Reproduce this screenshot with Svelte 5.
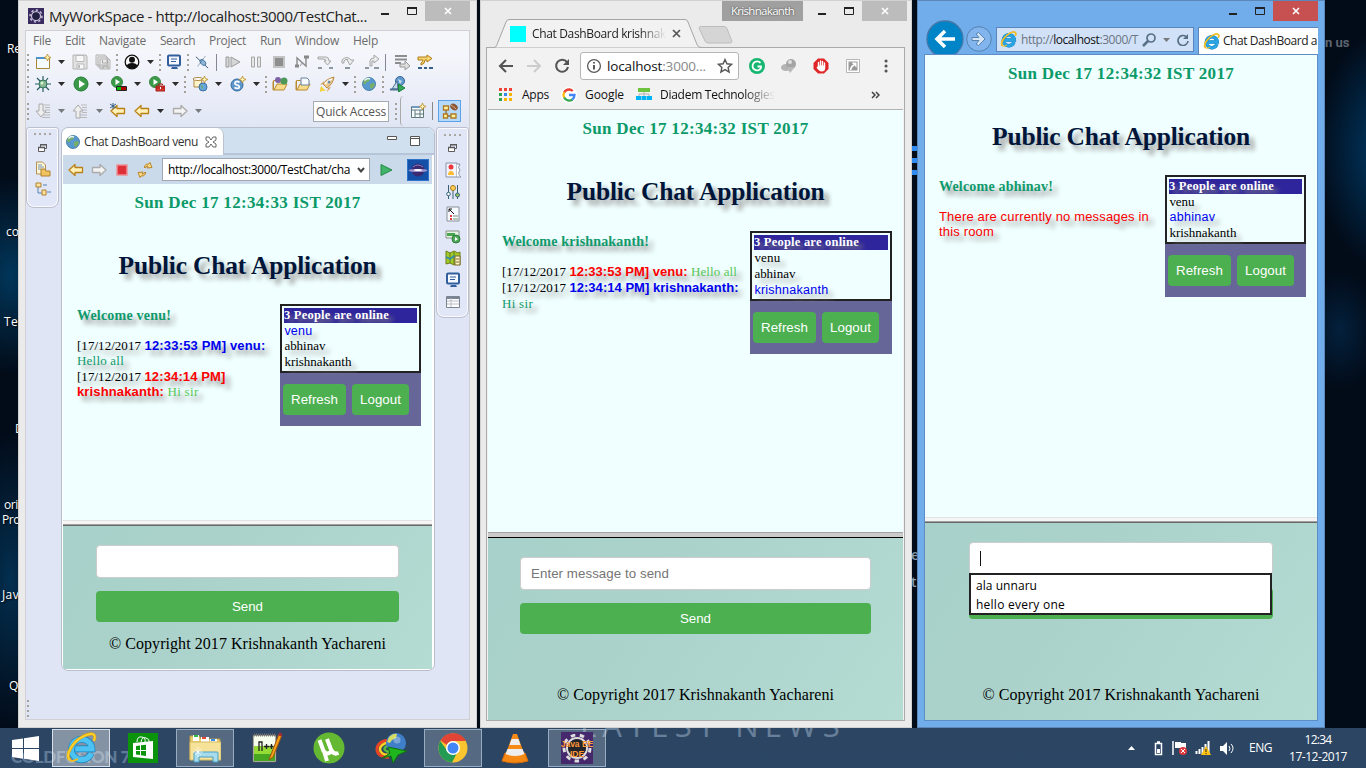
<script>
  // Spreads letters so that a label takes up exactly the given width.
  function fit(node, width) {
    const n = node.textContent.length;
    if (!n) return;
    const natural = node.getBoundingClientRect().width;
    node.style.letterSpacing = `${(width - natural) / n}px`;
  }

  const svg = (body, w = 16, h = w, vb = `0 0 ${w} ${h}`) =>
    `<svg width="${w}" height="${h}" viewBox="${vb}" fill="none">${body}</svg>`;

  const folder = '<path d="M1 5.5V14h11l3-6H5l-3 6" fill="#f8dc8c" stroke="#b98a2e"/><path d="M1.500 13.500V4.500h4l1 1.500h6v2" stroke="#b98a2e"/>';
  const play = '<circle cx="8" cy="8" r="7" fill="#3b9a48" stroke="#1f7a35"/><path d="M6 4l6 4-6 4z" fill="#fff"/>';
  const smallPlay = '<circle cx="6" cy="6" r="5.500" fill="#3b9a48" stroke="#3a8a43"/><path d="M4.500 3l4.500 3-4.500 3z" fill="#fff"/>';
  const spark = '<path d="M12.500 0l1 2.500L16 3.500l-2.500 1-1 2.500-1-2.500L9 3.500l2.500-1z" fill="#fff3b0" stroke="#b98a2e" stroke-width=".8"/>';
  const globe = '<circle cx="8" cy="8" r="6.500" fill="#5799cf" stroke="#336e9b" stroke-width=".8"/><path d="M3 3.500c2-2 5-2 6-1l-1 3-3 1-1 2-2-1zM9 8l4-1 1 2-3 4-2-1z" fill="#78ae65"/><path d="M3.500 4.500Q6 1.500 9 3" stroke="#e4f5ff" stroke-width="1.500"/>';
  const arrowL = (f, s) => `<path d="M1 8l6-5.500v3h7.500v5H7v3z" fill="${f}" stroke="${s}" stroke-width="1.300" stroke-linejoin="round"/>`;
  const arrowR = (f, s) => `<path d="M15 8L9 2.500v3H1.500v5H9v3z" fill="${f}" stroke="${s}" stroke-width="1.300" stroke-linejoin="round"/>`;
  // Blue "e" with a golden ring: an open ring, a crossbar and the orbit over it.
  const ie = (s, fill = '#2aa5e4') => svg(`<path d="M20.500 16.500A8 8 0 1 1 21 13.200H8" stroke="#1580bd" stroke-width="5.200"/><path d="M20.500 16.500A8 8 0 1 1 21 13.200H8" stroke="${fill}" stroke-width="4.200"/><path d="M4 22C-1 18 7 7 14 3.500S25 1 22.500 7" stroke="#e2a20f" stroke-width="2.400"/><path d="M4 22C-1 18 7 7 14 3.500S25 1 22.500 7" stroke="#fbd32f" stroke-width="1.400"/><path d="M4 22q2 1.500 6-1" stroke="#f3bd1f" stroke-width="1.500"/>`, s, s, '0 0 25 25');
  const googleG = '<path d="M8 2.500a5.500 5.500 0 0 1 3.800 1.500" stroke="#ea4335" stroke-width="2.300"/><path d="M3.200 5.500A5.500 5.500 0 0 1 8.500 2.500" stroke="#ea4335" stroke-width="2.300"/><path d="M3.200 5.300a5.500 5.500 0 0 0 0 5.400" stroke="#fbbc05" stroke-width="2.300"/><path d="M3.200 10.500a5.500 5.500 0 0 0 8.300 2" stroke="#34a853" stroke-width="2.300"/><path d="M8 8h5.500q0 3-2.200 4.700" stroke="#4285f4" stroke-width="2.300"/>';
  const gear = (c, r, w) => `<circle cx="16" cy="16" r="${r}" stroke="${c}" stroke-width="${w}"/><circle cx="16" cy="16" r="${r + 3}" stroke="${c}" stroke-width="3" stroke-dasharray="4.500 4.600"/>`;
  const linesR = '<path d="M9 2h6M10 4.500h5M10 7h5M10 9.500h5M8 12h7M7 14.500h8" stroke="#b9b9b9"/>';

  const icons = {
    grip: svg('<path d="M1 0v17" stroke="#a5a199" stroke-width="2" stroke-dasharray="2 3"/>', 2, 17),
    sep: svg('<path d="M.5 0v17" stroke="#848892"/>', 1, 17),
    drop: svg('<path d="M0 0h7L3.500 4z" fill="#2c2c2c"/>', 7, 4),
    dropG: svg('<path d="M0 0h7L3.500 4z" fill="#77797d"/>', 7, 4),
    newFile: svg('<path d="M1.500 3.500h13v11h-13z" fill="#f3fbff" stroke="#a98637"/><path d="M1 4h10" stroke="#4a93cc" stroke-width="2"/>' + spark),
    save: svg('<path d="M1 1h13l1 1v13H1z" fill="#e3e3e3" stroke="#b5b5b5"/><path d="M4 1.500h8v6H4zM5 10h7v5H5z" fill="#f8f8f8" stroke="#b9b9b9"/><path d="M7 11v3" stroke="#aaa" stroke-width="1.500"/>'),
    saveAll: svg('<path d="M1 1h9l2 2v8H1zM3 3h9l1 1v9H3zM5 5h9l1 1v9H5z" fill="#e9e9e9" stroke="#b3b3b3"/><path d="M7.500 6v3h5V6M8 15v-3h5v3" stroke="#aaa"/>'),
    person: svg('<circle cx="8" cy="8" r="6.800" fill="#fff" stroke="#111" stroke-width="1.300"/><circle cx="8" cy="5.800" r="3" fill="#111"/><path d="M2.500 12q1-3 5.500-3t5.500 3Q8 17 2.500 12z" fill="#111"/>'),
    monitor: svg('<rect x="2" y="1.500" width="12" height="10" rx="1" fill="#f5f9ff" stroke="#315f9d" stroke-width="2"/><path d="M5 5h6M5 7.500h5" stroke="#315f9d"/><path d="M5 15h7l-1-2H6z" fill="#315f9d"/>'),
    skip: svg('<path d="M1 2l14 13" stroke="#23476f"/><ellipse cx="9" cy="8.500" rx="4" ry="2.500" transform="rotate(45 9 8.500)" fill="#91b7d9" stroke="#38709f"/><path d="M12 1L3 13" stroke="#23476f" stroke-width=".5"/>', 14, 14, '0 0 16 16'),
    resume: svg('<path d="M1 3h3v10H1zM6 3l9 5-9 5z" fill="#d6d6d6" stroke="#9c9c9c"/>'),
    pause: svg('<path d="M3.500 3h3v10h-3zM9.500 3h3v10h-3z" fill="#e6e6e6" stroke="#a6a6a6"/>'),
    stopG: svg('<path d="M3 3h10v10H3z" fill="#8e8e8e" stroke="#c3c3c3" stroke-width="2"/>'),
    disc: svg('<path d="M3 13V4l9 8V3" stroke="#909090" stroke-width="1.500"/><path d="M1 12h4M10 3h5" stroke="#888" stroke-width="3"/><path d="M6 12l3-4" stroke="#999"/>'),
    into: svg('<path d="M1 3h8q3 0 3 4h2l-3.500 4L7 7h2q0-2-3-2H1z" fill="#ececec" stroke="#a5a5a5"/><path d="M1 14h4M12 14h4" stroke="#8e969f" stroke-width="2"/>'),
    over: svg('<path d="M2 9V6q5-5 9 0h3l-4 5-3-5h1Q6 4 4 7v2z" fill="#ececec" stroke="#a5a5a5"/><path d="M5 14h5" stroke="#8e969f" stroke-width="2"/>'),
    ret: svg('<path d="M6 12V7q0-3 4-3V1l5 4-5 4V7H8v5z" fill="#ececec" stroke="#a5a5a5"/><path d="M1 14h4M10 14h5" stroke="#8e969f" stroke-width="2"/>'),
    dropFrame: svg('<path d="M1 2h12M1 5.500h12M1 9h6" stroke="#8d8d8d" stroke-width="2"/><path d="M6 10h5V7l5 5-5 4v-3H6z" fill="#ddd" stroke="#999"/>'),
    filters: svg('<path d="M1 3h9V1l5 3.500L10 8V6H8q0 4-4 5V9q2-1 2-3H1z" fill="#f6d66c" stroke="#b17b19"/><path d="M1 14h4M7 14h3M12 14h4" stroke="#385f89" stroke-width="2"/>'),
    bug: svg('<path d="M2 2l4 4M8 0v5M13 2l-3 4M0 8h5M11 8h5M2 14l4-4M8 11v5M14 14l-4-4" stroke="#275e65" stroke-width="1.200"/><circle cx="8" cy="8" r="4" fill="#87b793" stroke="#34725b"/><circle cx="7" cy="7" r="1.500" fill="#d2f5ca"/>'),
    run: svg(play),
    cover: svg(smallPlay + '<path d="M6 10h4v4H6z" fill="#00c000"/><path d="M10 10h5v4h-5z" fill="#b00000"/><path d="M5.500 10.500h10v4h-10z" stroke="#222"/>'),
    ext: svg(smallPlay + '<path d="M7 10h9v5H7z" fill="#d93a32" stroke="#a41b19"/><path d="M9.500 9V8h4v1M7 12h9" stroke="#a41b19"/><path d="M11 12h1" stroke="#fff" stroke-width="2"/>'),
    server: svg('<path d="M2 3h8l-1 8H2z" fill="#fff4ca" stroke="#ad8740"/><ellipse cx="6" cy="3" rx="5" ry="1.500" fill="#fff" stroke="#ad8740"/><circle cx="11" cy="11" r="4" fill="#67a7de" stroke="#386fa2"/><path d="M9 9l2 1-1 4" fill="#71ac5a"/>' + spark),
    ess: svg('<circle cx="7" cy="9" r="6" fill="#5f97cd" stroke="#326a9c"/><path d="M9.500 6.500Q7 4.500 5.200 6.300 4 8.500 7 9t2 3Q7 13 4.500 11.500" stroke="#fff" stroke-width="1.700"/>' + spark),
    balls: svg(folder + '<circle cx="6" cy="4" r="3" fill="#7d62a7"/><circle cx="12" cy="5" r="3.500" fill="#4b9859"/>'),
    folder2: svg(folder + '<path d="M6 2h6l2 2v5H6z" fill="#f7fbff" stroke="#68819a"/>'),
    rocket: svg('<path d="M4 8q3-5 11-7-1 7-7 11z" fill="#ecc98d" stroke="#ba8d4a"/><path d="M6 8q3-4 7-5" stroke="#fff" stroke-width="1.500"/><path d="M2 10l5 5q-3-1-6 1 0-4 1-6z" fill="#f4d43c"/><path d="M4 8L1 9l4-4zM9 12l-1 4 4-5z" fill="#d39c55"/><circle cx="10" cy="6" r="1.500" fill="#738ca1"/>'),
    globe: svg(globe),
    globeRun: svg('<circle cx="10" cy="5" r="4.500" fill="#5f9bcf" stroke="#3a6696"/><path d="M8 3l4 2-2 3" fill="#c7dceb"/><path d="M2 13L7 5l1 8z" fill="#c7dceb" stroke="#4d6f94"/><path d="M0 13.500h9" stroke="#4d6f94" stroke-width="2"/><path d="M8.500 8l6.500 4-6.500 4z" fill="#35a85a" stroke="#19803b"/>'),
    nextAnn: svg(linesR + '<path d="M4 1h4v7h3l-5 6-5-6h3z" fill="#eee" stroke="#aaa"/>'),
    prevAnn: svg(linesR + '<path d="M4 15h4V8h3L6 2 1 8h3z" fill="#eee" stroke="#aaa"/>'),
    lastEdit: svg(arrowL('#fff1b7', '#b98015') + '<path d="M3 0v6M0 1l6 4M6 1L0 5" stroke="#385f86"/>'),
    back: svg(arrowL('#fff1b7', '#b98015')),
    fwd: svg(arrowR('#f3f3f3', '#aaa')),
    persp: svg('<path d="M1.500 3.500h12v11h-12zM1 7h13M5 7v8M10 7v8M5 11h9" fill="#f7fcff" stroke="#617b7c"/><path d="M2 4h8" stroke="#709ac1" stroke-width="2"/>' + spark),
    javaEE: svg('<path d="M4 7v6h5" stroke="#8b6a3a" stroke-width="1.300"/><path d="M1.500 3h5v4h-5zM9 11h5v4H9zM1.500 11h4v4h-4z" fill="#fff1a3" stroke="#b17a20" stroke-width="1.300"/><ellipse cx="12" cy="4" rx="4" ry="3" transform="rotate(35 12 4)" fill="#8b5635"/><path d="M9 2q3 2 5 4" stroke="#e0b28c"/>'),
    logo: svg('<rect width="32" height="32" fill="#392b60"/>' + gear('#c9c3d9', 9, 2.5) + '<circle cx="16" cy="16" r="7" fill="#222040"/>', 16, 16, '0 0 32 32'),
    dots: svg('<path d="M0 1h17" stroke="#aaa7a0" stroke-width="2" stroke-dasharray="2 3"/>', 17, 2),
    restore: svg('<path d="M2.500 3V.500h6v4H6" stroke="#5a5a5a"/><path d="M.5 3.500h6v4h-6z" fill="#fff" stroke="#5a5a5a"/><path d="M0 3.500h7M2 .8h7" stroke="#5a5a5a" stroke-width="1.500"/>', 9, 8),
    explorer: svg('<path d="M1.500 1h6l3 3v9h-9z" fill="#fff7d6" stroke="#b18f55"/><path d="M3 4h4M3 6h6M3 8h3" stroke="#7490ac"/><path d="M6 8h4l1 2h4v5H6z" fill="#f1c35c" stroke="#ad8032"/>'),
    outline: svg('<path d="M3 6v6h4" stroke="#5683b4"/><path d="M1 2h5v4H1zM7 9h4v5H7z" fill="#ffe29c" stroke="#ad8032"/><path d="M8 4h4M12 11h4" stroke="#5683b4"/>'),
    snippets: svg('<path d="M1 1h11v14H1z" fill="#f4f5ff" stroke="#8794aa"/><path d="M12 2h3q-3 4 0 6-3 4 1 7h-4" fill="#fff" stroke="#8794aa"/><circle cx="6" cy="5" r="2.500" fill="#ed373c"/><path d="M3 13q0-4 3-4t3 4z" fill="#ffbb31"/>'),
    sliders: svg('<path d="M3.500 1v14M8 1v14M12.500 1v14" stroke="#385e78"/><circle cx="3.500" cy="10" r="1.800" fill="#fff" stroke="#32677c"/><circle cx="8" cy="4" r="2.500" fill="#ffd153" stroke="#a77b20"/><circle cx="12.500" cy="11" r="2" fill="#9cbd5b" stroke="#32677c"/>'),
    pal: svg('<path d="M2 1h12v14H2z" fill="#f8fbff" stroke="#899199"/><path d="M4 3l5 5M4 6V3h3" stroke="#111"/><path d="M5 10h2M5 13h2" stroke="#e14341" stroke-width="2"/><path d="M8 10h5M8 13h5" stroke="#6c9271"/>'),
    servers: svg('<path d="M1 3h13v7H1z" fill="#e8f3e8" stroke="#849284"/><path d="M2 5h8v3H2z" fill="#48a54d"/><circle cx="11" cy="11" r="4" fill="#4ca75b" stroke="#307d3b"/><path d="M10 9l3 2-3 2z" fill="#fff"/>'),
    map: svg('<path d="M1 1l4 2 4-2 4 2 2-1v13l-3-1-3 1-4-2-4 1z" fill="#a5cb2a" stroke="#6d7c1b"/><path d="M5 3v10M9 2v12" stroke="#5c7a1b"/><path d="M1 7l4 2 4-3 3 2" stroke="#308fa6" stroke-width="1.800"/><path d="M10 6h5v9h-5z" fill="#fff6cc" stroke="#7c662d"/><path d="M11 9h3M11 12h3" stroke="#7c662d"/>'),
    props: svg('<path d="M1.500 2.500h13v11h-13z" fill="#fff" stroke="#7b8492"/><path d="M1 4h14" stroke="#7b8492" stroke-width="2"/><path d="M6 4v9M2 7h12M2 10h12" stroke="#b7bcc5"/>'),
    stop: svg('<path d="M3 3h10v10H3z" fill="#df3038" stroke="#ee9097" stroke-width="1.500"/>'),
    refresh: svg('<path d="M7 5q2-4 5-3l1-1.500 2 5-5 .5 1-2q-2-.5-3 2zM9 11q-2 4-5 3l-1 1.500-2-5 5-.5-1 2q2 .5 3-2z" fill="#fbdc88" stroke="#b98329" stroke-linejoin="round"/>'),
    go: svg('<path d="M3 2.500l11 5.500-11 5.500z" fill="#42b46a" stroke="#238a48"/>'),
    ecl: svg('<rect width="22" height="22" fill="#1450a8"/><path d="M.5.5h21v21H.5z" stroke="#2f74cc"/><circle cx="11" cy="11" r="6.500" fill="#3b2a70"/><path d="M6 8q5-4 10 0" stroke="#8f7fc0"/><ellipse cx="11" cy="11.500" rx="9.500" ry="1.600" fill="#9f93cf"/><ellipse cx="11" cy="11" rx="4" ry="1" fill="#fff"/>', 22),
    tabClose: svg('<path d="M1 1h3l2 3 2-3h3v3L8 6l3 2v3H8L6 8l-2 3H1V8l3-2-3-2z" fill="#fff" stroke="#555" stroke-width=".9"/>', 12),
    min: svg('<path d="M0 1h8" stroke="#222" stroke-width="2"/>', 8, 2),
    max: svg('<path d="M.5 1.500h9v6h-9z" stroke="#222"/><path d="M0 1h10" stroke="#222" stroke-width="2"/>', 10, 8),
    x: svg('<path d="M1 1l6 6M7 1L1 7" stroke="#fff" stroke-width="1.600"/>', 8),
    eMin: svg('<path d="M.5.5h9v3h-9z" fill="#fff" stroke="#555"/>', 10, 4),
    eMax: svg('<path d="M.5.5h9v9h-9zM0 2.500h10" fill="#fff" stroke="#555"/>', 10),
    cBack: svg('<path d="M15 8H2M8 2L2 8l6 6" stroke="#555" stroke-width="2.100"/>'),
    cFwd: svg('<path d="M1 8h13M8 2l6 6-6 6" stroke="#ccc" stroke-width="2"/>'),
    cLoad: svg('<path d="M13 4.200A6 6 0 1 0 14 9" stroke="#555" stroke-width="2.100"/><path d="M15 1v6H9z" fill="#555"/>'),
    info: svg('<circle cx="8" cy="8" r="6.400" stroke="#5a5a5a" stroke-width="1.300"/><path d="M8 7v4.500M8 4v1.600" stroke="#5a5a5a" stroke-width="2"/>'),
    star: svg('<path d="M8 1.500l1.900 4.300 4.700.5-3.500 3.100 1 4.600L8 11.600 3.900 14l1-4.600L1.400 6.300l4.700-.5z" stroke="#555" stroke-width="1.400"/>'),
    gram: svg('<circle cx="8" cy="8" r="8" fill="#15b66f"/><path d="M11.500 5A4.500 4.500 0 1 0 12 10V8.500H8.500" stroke="#fff" stroke-width="1.800"/>'),
    pin: svg('<ellipse cx="5" cy="9.500" rx="5" ry="3.500" fill="#b3b3b3"/><circle cx="10" cy="6" r="5" fill="#a5a5a5"/><path d="M6 9l3 6 5-6z" fill="#b8b8b8"/><circle cx="9" cy="4" r="2" fill="#dedede"/>'),
    block: svg('<path d="M5 .5h6L15.500 5v6L11 15.500H5L.5 11V5z" fill="#df2526"/><path d="M5.500 9V4.500M7.500 8V3M9.500 8V3.500M11.500 9V5" stroke="#fff" stroke-width="1.400" stroke-linecap="round"/><path d="M5 7.500h7.200V10q0 3.500-3.500 3.500Q6 13.500 3.500 9.500l1-.7z" fill="#fff"/>'),
    share: svg('<path d="M1.500 1.500h13v13h-13z" fill="#fff" stroke="#b6b6b6"/><path d="M3.500 3.500h9v9h-9z" fill="#999"/><path d="M5.500 12Q6 8.500 9 7" stroke="#fff" stroke-width="1.500"/><path d="M6.500 4.500h5v5z" fill="#fff"/>'),
    menu: svg('<path d="M2 2h.1M2 7h.1M2 12h.1" stroke="#555" stroke-width="3" stroke-linecap="round"/>', 4, 14),
    apps: svg('<path d="M0 1.500h13" stroke="#ef4338" stroke-width="3" stroke-dasharray="3 2"/><path d="M0 6.500h3" stroke="#31a350" stroke-width="3"/><path d="M5 6.500h3" stroke="#3387ed" stroke-width="3"/><path d="M10 6.500h3M5 11.500h3M10 11.500h3" stroke="#f7b400" stroke-width="3"/><path d="M0 11.500h3" stroke="#31a350" stroke-width="3"/>', 13),
    google: svg('<circle cx="8" cy="8" r="8" fill="#fff"/>' + googleG),
    diadem: svg('<path d="M2 1h12v4H2z" fill="#6dc23e"/><path d="M8 5v5M3 9V7h10v2" stroke="#b3b3b3"/><path d="M0 9h5v4H0zM5.500 9h5v4h-5zM11 9h5v4h-5z" fill="#00b3f4"/>'),
    more: svg('<path d="M1 1l3 3-3 3M5 1l3 3-3 3" stroke="#444" stroke-width="1.500"/>', 9, 8),
    tabX: svg('<path d="M1 1l7 7M8 1L1 8" stroke="#555" stroke-width="1.700"/>', 9),
    ieBack: svg('<circle cx="19" cy="19" r="18" fill="#0084c8" stroke="#4377a7" stroke-width="1.300"/><path d="M29 19H12M19 11l-8 8 8 8" stroke="#fff" stroke-width="3.500"/>', 38),
    ieFwd: svg('<circle cx="13" cy="13" r="12.300" fill="#82b5ee" stroke="#5581ae"/><path d="M6 11.500h7L10 8l2.500-1.500L19 13l-6.500 6.500L10 18l3-3.500H6z" fill="#d4e5f8" stroke="#5884ae"/>', 26),
    ie16: ie(17),
    search: svg('<circle cx="9" cy="5" r="4" stroke="#587087" stroke-width="1.700"/><path d="M6 8l-5 5" stroke="#587087" stroke-width="2.500"/>', 14),
    ieLoad: svg('<path d="M10 3.500A5 5 0 1 0 12 8" stroke="#587087" stroke-width="1.700"/><path d="M12 1v5H7z" fill="#587087"/>', 13),
    start: svg('<path d="M0 4l11-1.600V12H0zM12 2.200L27 0v12H12zM0 13h11v9.700L0 21zM12 13h15v12l-15-2.200z" fill="#fff"/>', 27, 25),
    ie32: ie(32, '#4cc3f2'),
    store: svg('<path d="M0 0h30v30H0z" fill="#0a930b"/><path d="M5 10l20-2v18L5 24z" fill="#fff"/><path d="M9 9q0-6 5-5 4 1 3 5M13 9q1-6 5-4 4 1 3 4" stroke="#fff"/><path d="M8 13l4-.5v4.500H8zM13 12.300l5-.5V17h-5zM8 18h4v4l-4-.5zM13 18h5v5l-5-.7z" fill="#0a930b"/>', 30),
    files: svg('<path d="M1 3h9l2 3h19v20H1z" fill="#e9cf6d" stroke="#b89b45"/><path d="M4 2h6v6H4zM12 4h8v6h-8zM21 6h7v6h-7z" fill="#fff"/><path d="M5 3h4" stroke="#30b84b" stroke-width="2"/><path d="M13 5h4" stroke="#e8462d" stroke-width="2"/><path d="M22 7h4" stroke="#378ee2" stroke-width="2"/><path d="M1 9h31v18H1z" fill="#f6e299" stroke="#d3bb65"/><path d="M5 20q0-1 1-1h22q1 0 1 1v9h-5v-5H10v5H5z" fill="#a6dcec" stroke="#4ba0c5"/><path d="M9 14v10M4 19h10M6 16l6 6M12 16l-6 6" stroke="#fff" stroke-width=".7"/>', 32, 30),
    npp: svg('<path d="M1 3h23v27H1z" fill="#f7ffed" stroke="#555"/><path d="M2 14h21v15H2z" fill="#95dc35"/><path d="M2 22h21v7H2z" fill="#279019" opacity=".7"/><path d="M2 3h21" stroke="#777" stroke-width="3" stroke-dasharray="1 1"/><path d="M7 19V10h3v9M12 14.500h5M14.500 12v5M17.500 14.500h4M19.500 12v5" stroke="#222" stroke-width="1.300"/><path d="M27 2L18 25l-1 3 4-3L30 3z" fill="#f5a313" stroke="#9e5315"/><path d="M27 2l3 1" stroke="#a72b32" stroke-width="3"/>', 30, 32),
    ut: svg('<circle cx="16" cy="16" r="15.500" fill="#65b832"/><path d="M6.500 8l4 11q4 5 8 0L14 7M18.500 18q2 5 7 3M11 19l3 10" stroke="#fff" stroke-width="4"/>', 32),
    idm: svg('<path d="M14 8C-3 9-1 27 14 25" stroke="#e84424" stroke-width="3"/><path d="M14 10.500C1 12 3 24 14 22.500" stroke="#fad322" stroke-width="2.500"/><path d="M14 13Q5 17 14 20" stroke="#54be3a" stroke-width="2.500"/><circle cx="21" cy="11" r="10" fill="#3f7fc9"/><path d="M14 5q4-4 8-3l-1 4-4 2-2 3-3-1z" fill="#d5dc62"/><circle cx="22" cy="8" r="3.500" fill="#fff" opacity=".3"/><path d="M13 15l19 4-9 4-5 8-2-7-9 2q4-2 8-5z" fill="#1fb51c" stroke="#126d12"/>', 32),
    chrome: svg('<circle cx="16" cy="16" r="14.500" fill="#fbc52f"/><path d="M3.500 8.500A14.500 14.500 0 0 1 29 9H16a7 7 0 0 0-6.200 4z" fill="#e24435"/><path d="M3.300 9A14.500 14.500 0 0 0 15 30.500l6-11.500a7 7 0 0 1-11-.5z" fill="#249b53"/><circle cx="16" cy="16" r="7" fill="#fff"/><circle cx="16" cy="16" r="5.500" fill="#4285f4"/>', 32),
    vlc: svg('<path d="M4 20h20l3 8q-13 4-26 0z" fill="#f58813" stroke="#d46b0c"/><path d="M12 1h4l8 22q-10 5-20 0z" fill="#f68a16"/><path d="M10.500 6h7l2 6h-11zM6.500 16h15l2 5q-9 4-19 0z" fill="#eee"/>', 28, 31),
    jee: svg('<rect width="32" height="32" fill="#46286c"/>' + gear('#ddd', 10, 2) + '<circle cx="16" cy="16" r="9" fill="#23252b"/><text x="16" y="15" text-anchor="middle" fill="#ff9a35" font-family="Liberation Sans" font-weight="700" font-size="8.500">Java EE</text><text x="16" y="24.500" text-anchor="middle" fill="#ff9a35" font-family="Liberation Sans" font-weight="700" font-size="8.500">IDE</text>', 32),
    up: svg('<path d="M0 4h7L3.500 0z" fill="#fff"/>', 7, 4),
    battery: svg('<path d="M1.500 2.500h6v11h-6zM3 1h3" stroke="#fff" stroke-width="1.500"/><path d="M3 8h3v4H3z" fill="#fff"/>', 9, 15),
    flag: svg('<path d="M1 1v14" stroke="#fff" stroke-width="1.500"/><path d="M3 2h6v1h5v6H9V8H3z" fill="#fff"/><circle cx="11" cy="11" r="4" fill="#de3c3e"/><path d="M9 9l4 4M13 9l-4 4" stroke="#fff"/>'),
    net: svg('<path d="M1.500 11v3M4.500 9v5M7.500 7v7M10.500 4v10M13.500 1v13" stroke="#fff" stroke-width="2"/><path d="M11 6l5 9H6z" fill="#ffc20e"/><path d="M11 9v3M11 13v1" stroke="#222"/>'),
    vol: svg('<path d="M0 5h3l4-4v13L3 10H0z" fill="#fff"/><path d="M9 5q2 3 0 5M11 3q4 4 0 9" stroke="#fff"/>', 15, 15)
  };

  // Turns icon centres into gaps, so that a flex row can carry them.
  function place(items, origin) {
    let edge = origin;
    return items.map(([name, centre]) => {
      const w = +icons[name].match(/width="(\d+)"/)[1];
      const left = Math.round(centre - w / 2);
      const item = { name, w, gap: left - edge };
      edge = left + w;
      return item;
    });
  }

  const row1 = [['grip', 28], ['newFile', 43], ['drop', 61], ['save', 80], ['saveAll', 103], ['grip', 117], ['person', 132], ['drop', 150], ['grip', 160], ['monitor', 174], ['grip', 188], ['skip', 202], ['sep', 216], ['resume', 233], ['pause', 256], ['stopG', 279], ['disc', 302], ['into', 325], ['over', 348], ['ret', 372], ['sep', 385], ['dropFrame', 402], ['filters', 425]];
  const row2 = [['grip', 28], ['bug', 43], ['drop', 61], ['run', 81], ['drop', 99], ['cover', 119], ['drop', 137], ['ext', 157], ['drop', 175], ['grip', 185], ['server', 200], ['drop', 218], ['ess', 238], ['drop', 256], ['grip', 266], ['balls', 280], ['folder2', 303], ['rocket', 327], ['drop', 345], ['grip', 355], ['globe', 369], ['grip', 383], ['globeRun', 398]];
  const row3 = [['grip', 28], ['nextAnn', 43], ['dropG', 61], ['prevAnn', 80], ['dropG', 99], ['lastEdit', 118], ['back', 142], ['drop', 160], ['fwd', 180], ['dropG', 198]];
  const menus = [['File', 18, 14], ['Edit', 20, 14], ['Navigate', 47, 14], ['Search', 35, 14], ['Project', 37, 14], ['Run', 21, 14], ['Window', 44, 14], ['Help', 25, 0]];

  const green = '#129b6b';
  const lime = '#58c858';
  const pages = [
    {
      date: ['Sun Dec 17 12:34:33 IST 2017', 226], chat: 336, lh: 15.4,
      welcome: ['Welcome venu!', 94],
      lines: [
        [['[17/12/2017', 64, 'd'], ['12:33:53 PM] venu:', 121, 'b blue']],
        [['Hello all', 47, 'd', green]],
        [['[17/12/2017', 64, 'd'], ['12:34:14 PM]', 81, 'b red']],
        [['krishnakanth:', 87, 'b red'], ['Hi sir', 31, 'd', lime]]
      ],
      users: [['venu', 28, true], ['abhinav', 41], ['krishnakanth', 67]],
      side: [141, 69, 0],
      pad: 33, placeholder: '', copyGap: 12, rule: 'soft'
    },
    {
      date: ['Sun Dec 17 12:34:32 IST 2017', 226], chat: 422, lh: 16,
      welcome: ['Welcome krishnakanth!', 147],
      lines: [
        [['[17/12/2017', 64, 'd'], ['12:33:53 PM] venu:', 118, 'b red'], ['Hello all', 46, 'd', lime]],
        [['[17/12/2017', 64, 'd'], ['12:34:14 PM] krishnakanth:', 169, 'b blue']],
        [['Hi sir', 31, 'd', green]]
      ],
      users: [['venu', 26], ['abhinav', 41], ['krishnakanth', 74, true]],
      side: [142, 70, 1],
      pad: 32, placeholder: 'Enter message to send', copyGap: 51, rule: 'hard'
    },
    {
      date: ['Sun Dec 17 12:34:32 IST 2017', 226], chat: 462, lh: 15.4,
      welcome: ['Welcome abhinav!', 114],
      lines: [
        [['There are currently no messages in', 210, 'n red']],
        [['this room', 55, 'n red']]
      ],
      users: [['venu', 25], ['abhinav', 46, true], ['krishnakanth', 67]],
      side: [141, 69, 0],
      pad: 44, placeholder: '', copyGap: 66, rule: 'soft', suggestions: [['ala unnaru', 61], ['hello every one', 89]]
    }
  ];

  const fragments = [
    ['Re', 7, 42, 14], ['co', 6, 225, 13], ['Te', 4, 315, 14], ['D', 15, 422, 8], ['ori', 4, 498, 14],
    ['Pro', 2, 513, 18], ['Jav', 2, 588, 17], ['Q', 9, 679, 9]
  ];
  const tasks = ['start', 'ie32', 'store', 'files', 'npp', 'ut', 'idm', 'chrome', 'vlc', 'jee'];
  const open = { ie32: true, files: true, chrome: true, jee: true };
</script>

{#snippet icon(name)}<span class="ic">{@html icons[name]}</span>{/snippet}

{#snippet strip(items, origin)}
  {#each place(items, origin) as it}
    <span class="ic" style:margin-left="{it.gap}px">{@html icons[it.name]}</span>
  {/each}
{/snippet}

{#snippet chatPage(p)}
  <div class="page">
    <div class="chat" style:height="{p.chat}px">
      <div class="date"><span use:fit={p.date[1]}>{p.date[0]}</span></div>
      <h1><span use:fit={258}>Public Chat Application</span></h1>
      <div class="room">
        <div class="talk">
          <div class="welcome"><span use:fit={p.welcome[1]}>{p.welcome[0]}</span></div>
          <div class="log" style:line-height="{p.lh}px">
            {#each p.lines as line}
              <div class="line" style:height="{p.lh}px">
                {#each line as part}
                  <span class={part[2]} style:color={part[3]} use:fit={part[1]}>{part[0]}</span>
                {/each}
              </div>
            {/each}
          </div>
        </div>
        <aside style:width="{p.side[0]}px" style:margin-top="{p.side[2]}px">
          <div class="people" style:line-height="{p.lh}px" style:height="{p.side[1]}px">
            <div class="head"><span use:fit={105}>3 People are online</span></div>
            {#each p.users as u}
              <div class="user" style:height="{p.lh}px"><span class:self={u[2]} use:fit={u[1]}>{u[0]}</span></div>
            {/each}
          </div>
          <div class="actions">
            <div class="btn r"><span use:fit={47}>Refresh</span></div>
            <div class="btn l"><span use:fit={41}>Logout</span></div>
          </div>
        </aside>
      </div>
    </div>
    <div class="rule {p.rule}"></div>
    <div class="foot" style:padding="19px {p.pad}px 0">
      <div class="field">
        {#if p.placeholder}<span use:fit={138}>{p.placeholder}</span>{/if}
        {#if p.suggestions}
          <i class="caret"></i>
          <div class="suggest">
            {#each p.suggestions as s}<div><span use:fit={s[1]}>{s[0]}</span></div>{/each}
          </div>
        {/if}
      </div>
      <div class="send">{#if !p.suggestions}<span use:fit={31}>Send</span>{/if}</div>
      <div class="copy" style:margin-top="{p.copyGap}px"><span use:fit={277}>© Copyright 2017 Krishnakanth Yachareni</span></div>
    </div>
  </div>
{/snippet}

<div class="desktop">
  {#each fragments as f}
    <span class="frag" style:left="{f[1]}px" style:top="{f[2]}px"><b use:fit={f[3]}>{f[0]}</b></span>
  {/each}
  <span class="ghost us">n us</span>
  <span class="ghost cold"><b use:fit={119}>COLDFUSION 7</b></span>
  <span class="ghost news"><b use:fit={266}>LATEST NEWS</b></span>
  <i class="bars"></i>
  <span class="ghost bit" style:top="547px">e</span>
  <span class="ghost bit" style:top="574px">t</span>

  <section class="win eclipse">
    <header class="title">
      {@render icon('logo')}
      <span class="cap"><span use:fit={318}>MyWorkSpace - http://localhost:3000/TestChat...</span></span>
      <span class="wbtn wmin">{@render icon('min')}</span>
      <span class="wbtn wmax">{@render icon('max')}</span>
      <span class="close">{@render icon('x')}</span>
    </header>
    <div class="ebody">
      <nav class="menubar">
        {#each menus as m}<span class="mi" style:width="{m[1]}px" style:margin-right="{m[2]}px"><span use:fit={m[1]}>{m[0]}</span></span>{/each}
      </nav>
      <div class="tools">
        <div class="trow">{@render strip(row1, 26)}</div>
        <div class="trow">{@render strip(row2, 26)}</div>
        <div class="trow third">
          {@render strip(row3, 26)}
          <div class="quick"><span use:fit={70}>Quick Access</span></div>
          {@render icon('grip')}
          <i class="curve"></i>
          {@render icon('persp')}
          <i class="psep"></i>
          <span class="active">{@render icon('javaEE')}</span>
        </div>
      </div>
      <div class="work">
        <div class="trim left">
          {@render icon('dots')}{@render icon('restore')}{@render icon('explorer')}{@render icon('outline')}
        </div>
        <div class="editor">
          <div class="etabs">
            <div class="etab">{@render icon('globe')}<span class="tt"><span use:fit={114}>Chat DashBoard venu</span></span>{@render icon('tabClose')}</div>
            <span class="ectl">{@render icon('eMin')}{@render icon('eMax')}</span>
          </div>
          <div class="inner">
            <div class="eurl">
              {@render strip([['back', 76], ['fwd', 99], ['stop', 122], ['refresh', 145]], 63)}
              <div class="combo"><span class="clip"><span use:fit={182}>http://localhost:3000/TestChat/cha</span></span>
                <svg width="8" height="6" viewBox="0 0 8 6" fill="none"><path d="M1 1l3 3.500L7 1" stroke="#444" stroke-width="2" /></svg>
              </div>
              {@render strip([['go', 386], ['ecl', 418]], 370)}
            </div>
            {@render chatPage(pages[0])}
          </div>
        </div>
        <div class="trim right">
          {#each ['dots', 'restore', 'snippets', 'sliders', 'pal', 'servers', 'map', 'monitor', 'props'] as n}{@render icon(n)}{/each}
        </div>
      </div>
      <div class="status">{@render icon('grip')}</div>
    </div>
  </section>

  <section class="win chrome">
    <header class="ctitle">
      <span class="badge"><span use:fit={63}>Krishnakanth</span></span>
      <span class="wbtn cmin">{@render icon('min')}</span>
      <span class="wbtn cmax">{@render icon('max')}</span>
      <span class="close">{@render icon('x')}</span>
    </header>
    <div class="ctabs">
      <div class="ctab">
        <svg class="shape" width="210" height="29" viewBox="0 0 210 29"><path d="M0 28.500q2 0 3-3L12 3Q13 .5 15 .5H191q2 0 3 2.500l9 22.500q1 3 4 3" fill="#f2f2f2" stroke="#a5a5a5" /></svg>
        <i class="fav"></i>
        <span class="ctext"><span use:fit={134}>Chat DashBoard krishnak</span></span>
        {@render icon('tabX')}
      </div>
      <svg class="newtab" width="35" height="18" viewBox="0 0 35 18"><path d="M2 .5h24q2 0 3 2l5 13q0 1.500-2 1.500H10q-2 0-3-2L1 2z" fill="#d5d5d5" stroke="#bdbdbd" /></svg>
    </div>
    <div class="cbody">
      <div class="cbar">
        {@render strip([['cBack', 506], ['cFwd', 534], ['cLoad', 562]], 487)}
        <div class="omni">{@render icon('info')}<span class="host"><span use:fit={99}>localhost<em>:3000...</em></span></span>{@render icon('star')}</div>
        {@render strip([['gram', 757], ['pin', 789], ['block', 821], ['share', 853], ['menu', 886]], 739)}
      </div>
      <div class="marks">
        {@render icon('apps')}<span class="mk m1"><span use:fit={27}>Apps</span></span>
        {@render icon('google')}<span class="mk m2"><span use:fit={39}>Google</span></span>
        {@render icon('diadem')}<span class="mk m3"><span use:fit={115}>Diadem Technologies</span></span>
        {@render icon('more')}
      </div>
      {@render chatPage(pages[1])}
    </div>
  </section>

  <section class="win explorer">
    <header class="ititle">
      <span class="wbtn">{@render icon('min')}</span>
      <span class="wbtn imax">{@render icon('max')}</span>
      <span class="close red">{@render icon('x')}</span>
    </header>
    <div class="inav">
      {@render icon('ieBack')}
      <span class="ifwd">{@render icon('ieFwd')}</span>
      <div class="iaddr">
        {@render icon('ie16')}
        <span class="iurl"><span use:fit={117}>http://<b>localhost</b>:3000/T</span></span>
        {@render strip([['search', 1149], ['dropG', 1166], ['ieLoad', 1182]], 1142)}
      </div>
      <div class="itab">{@render icon('ie16')}<span class="itt"><span use:fit={94}>Chat DashBoard a</span></span></div>
    </div>
    <div class="ibody">{@render chatPage(pages[2])}</div>
  </section>

  <footer class="taskbar">
    <div class="apps">
      {#each tasks as t}<span class="task {t}" class:open={open[t]} class:front={t === 'ie32'}>{@render icon(t)}</span>{/each}
    </div>
    <div class="tray">
      {@render strip([['up', 1131], ['battery', 1158], ['flag', 1180], ['net', 1203], ['vol', 1227]], 1127)}
      <span class="eng"><span use:fit={23}>ENG</span></span>
      <div class="clock"><span use:fit={27}>12:34</span><br /><span use:fit={58}>17-12-2017</span></div>
    </div>
  </footer>
</div>

<style>
  :global(body) { margin: 0; overflow: hidden; }
  .desktop, .desktop :global(*) { box-sizing: border-box; }
  .desktop { position: relative; width: 1366px; height: 768px; overflow: hidden; font: 12px/16px 'Open Sans', sans-serif; color: #222;
    background: radial-gradient(ellipse 70px 120px at 1385px 150px, #003a66, transparent), radial-gradient(ellipse 40px 60px at 1340px 330px, #03203c, transparent), radial-gradient(ellipse 60px 100px at 10px 275px, #01365a, transparent), radial-gradient(ellipse 50px 150px at 10px 580px, #032f50, transparent), #020b18; }
  .desktop span { white-space: nowrap; }
  .ic { display: block; flex: none; }
  .ic :global(svg) { display: block; }
  span > span, b { display: inline-block; font-weight: inherit; }
  .frag { position: absolute; line-height: 14px; color: #fff; text-shadow: 1px 1px 2px #000; }
  .ghost { position: absolute; color: #8b9bab; }
  .us { left: 1325px; top: 34px; font: 700 13px/18px Roboto, sans-serif; color: #5c6570; }
  .cold { left: 11px; top: 746px; font: 900 17px/22px Lato, sans-serif; color: #dfe6ee; }
  .news { left: 580px; top: 709px; font: 400 31px/32px 'Open Sans', sans-serif; color: #fff; }
  .bit { left: 911px; font: 600 14px/16px 'Open Sans', sans-serif; }
  .bars { position: absolute; left: 906px; top: 146px; width: 11px; height: 31px; background: repeating-linear-gradient(#2d8bf2 0 5px, transparent 5px 12px); }

  .win { position: absolute; top: 0; height: 728px; border: 1px solid #d1d1d1; background: #ebebeb; }
  .close { display: flex; align-items: center; justify-content: center; width: 45px; height: 20px; background: #bcbcbc; align-self: flex-start; }
  .close.red { background: #c75050; }
  .wbtn { display: flex; align-items: center; }

  .eclipse { left: 18px; width: 459px; padding: 0 6px 7px; display: flex; flex-direction: column; }
  .title { display: flex; height: 30px; padding-left: 3px; align-items: center; }
  .cap { width: 337px; padding-left: 5px; font-size: 15px; line-height: 24px; }
  .wmin { width: 26px; height: 4px; margin-top: -5px; }
  .wmax { width: 18px; height: 8px; margin-top: -11px; }
  .ebody { width: 445px; height: 690px; border: 1px solid #d0d0d4; background: #e0e5f5; display: flex; flex-direction: column; margin-top: -1px; }
  .menubar { display: flex; height: 20px; padding-left: 7px; background: #f5f6f9; color: #6c6c6c; line-height: 20px; }
  .tools { height: 76px; background: linear-gradient(#f6f7fc, #e1e6f5); }
  .trow { display: flex; height: 22px; align-items: center; }
  .third { height: 32px; }
  .quick { margin-left: 111px; width: 76px; height: 21px; border: 1px solid #a5a9b0; background: #fff; padding-left: 2px; line-height: 20px; color: #555; }
  .third > .quick + .ic { margin-left: 6px; }
  .curve { width: 4px; height: 30px; margin: 0 6px 0 3px; border-left: 1px solid #aaa; border-radius: 4px 0 0 4px; }
  .psep { width: 1px; height: 18px; background: #888; margin: 0 5px 0 6px; }
  .active { display: flex; width: 23px; height: 22px; align-items: center; justify-content: center; background: #b5d8fb; border: 1px solid #5ba3e6; }
  .work { display: flex; height: 544px; align-items: flex-start; }
  .trim { width: 33px; border: 1px solid #bcbfce; border-radius: 3px 3px 8px 8px; background: #e2e7f7; display: flex; flex-direction: column; align-items: center; box-shadow: inset 0 0 0 1px #fbfbff; }
  .left { height: 81px; padding-top: 5px; gap: 4px; }
  .left .ic:nth-child(2) { margin: 5px 0; }
  .right { height: 191px; margin-left: 1px; padding-top: 6px; gap: 6px; }
  .right .ic:nth-child(2) { margin: 2px 0 4px; }
  .editor { margin-left: 2px; width: 374px; height: 544px; border: 1px solid #b7bfca; border-radius: 7px; background: #fff; overflow: hidden; }
  .etabs { display: flex; height: 27px; background: #d1e0ef; justify-content: space-between; align-items: flex-start; border-bottom: 2px solid #b6c6d8; }
  .etab { display: flex; align-items: center; width: 162px; height: 27px; padding-left: 3px; background: #fff; border-right: 1px solid #b9c4d0; border-radius: 7px 7px 0 0; }
  .tt { width: 124px; padding-left: 3px; color: #333; }
  .ectl { display: flex; gap: 13px; padding: 8px 14px 0 0; }
  .inner { margin: 0 2px 0 1px; height: 514px; display: flex; flex-direction: column; }
  .eurl { display: flex; height: 29px; flex: none; background: #cbdaea; align-items: center; }
  .combo { display: flex; width: 208px; height: 23px; margin-left: 9px; padding: 0 4px 0 5px; background: #fff; border: 1px solid #a0a7b0; align-items: center; justify-content: space-between; color: #000; }
  .clip { width: 185px; }
  .status { padding: 29px 0 0 1px; }

  .page { display: flex; flex-direction: column; flex: 1; min-height: 0; color: #000; font-family: 'Liberation Serif', serif; }
  .chat { flex: none; background: #f0ffff; }
  .date { padding-top: 9px; height: 29px; font-size: 17px; font-weight: bold; line-height: 20px; text-align: center; color: #0b9a68; }
  h1 { margin: 38px 0 23px; height: 30px; font-size: 25.5px; line-height: 30px; text-align: center; color: #00153a; text-shadow: 5px 5px 5px #999; }
  h1 span, .date span, .welcome span, .line span, .head span, .btn span, .send span, .copy span, .field > span, .suggest span, .clock span, .quick span, aside span, .clip span { display: inline-block; white-space: nowrap; }
  .room { display: flex; justify-content: space-between; align-items: flex-start; padding: 0 11px 0 14px; }
  .talk { padding-top: 4px; }
  .welcome { height: 16px; margin-bottom: 14px; font-size: 14px; font-weight: bold; line-height: 16px; color: #109a6c; text-shadow: 5px 5px 5px #999; }
  .log { font-size: 13px; text-shadow: 5px 5px 5px #999; }
  .line { display: flex; gap: 3.500px; }
  .b, .n { font-family: 'Liberation Sans', sans-serif; font-size: 13px; }
  .b { font-weight: bold; }
  .blue, .self { color: #0000ee; }
  .line .red { color: #fb0000; }
  aside { background: #669; }
  .people { border: 2px solid #222; background: #f0ffff; padding: 2px; font-size: 13px; text-shadow: 5px 5px 5px #aaa; }
  .head { background: #2e259c; color: #fff; font-weight: bold; font-size: 12.5px; text-shadow: 4px 4px 5px #888; height: 15px; line-height: 15px; overflow: hidden; }
  .self { font-family: 'Liberation Sans', sans-serif; font-size: 12.5px; }
  .user { padding-left: .4px; }
  .actions { display: flex; gap: 6px; height: 53px; padding: 11px 0 0 3px; }
  .btn, .send { height: 31px; border-radius: 4px; background: #4caf50; color: #fff; font: 13.300px/31px 'Liberation Sans', sans-serif; text-align: center; }
  .r { width: 63px; }
  .l { width: 57px; }
  .rule { height: 6px; flex: none; }
  .soft { background: linear-gradient(#e3e3e3 0 1px, #f5f5f5 1px 4px, #a0a0a0 4px 5px, #696969 5px); }
  .hard { background: linear-gradient(#a3a3a3 0 1px, #cbcbcb 1px 5px, #000 5px); }
  .foot { flex: 1; background: linear-gradient(125deg, #a7d1ca, #aad2cb 35%, #b4dcd3); }
  .field { position: relative; height: 33px; border: 1px solid #ccc; border-radius: 4px; background: #fff; padding-left: 10px; color: #757575; font: 13.300px/31px 'Liberation Sans', sans-serif; }
  .caret { display: block; width: 1px; height: 15px; margin-top: 8px; background: #111; }
  .send { margin-top: 13px; }
  .copy { font-size: 16px; line-height: 20px; height: 20px; text-align: center; }
  .suggest { position: absolute; left: -1px; top: 30px; width: 303px; height: 42px; border: 2px solid #222; background: #fff; padding: 1px 0 0 5px; font: 12px/19px 'Open Sans', sans-serif; color: #000; }

  .chrome { left: 480px; width: 432px; padding: 0 6px; }
  .ctitle { display: flex; height: 18px; padding-left: 235px; }
  .badge { width: 81px; height: 20px; background: #a0a0a0; color: #fff; text-shadow: 0 0 2px #333; padding-left: 9px; font-size: 11.500px; line-height: 20px; flex: none; }
  .cmin { width: 26px; margin-left: 15px; height: 26px; }
  .cmax { width: 18px; height: 20px; }
  .ctitle .close { margin-right: -3px; flex: none; }
  .ctabs { display: flex; height: 29px; padding-left: 7px; }
  .ctab { position: relative; display: flex; width: 204px; align-items: center; padding-left: 16px; flex: none; }
  .shape { position: absolute; left: 0; top: 0; }
  .ctab > .fav, .ctab > .ctext, .ctab > .ic { position: relative; }
  .fav { width: 16px; height: 16px; background: cyan; flex: none; }
  .ctext { width: 134px; margin: 0 6px; overflow: hidden; -webkit-mask: linear-gradient(90deg, #000 80%, transparent); }
  .newtab { margin-top: 7px; }
  .cbody { width: 419px; height: 674px; margin-left: -1px; border: 1px solid #aaa; background: #f2f2f2; display: flex; flex-direction: column; padding: 0 1px; margin-top: -1px; }
  .cbody > .page { border-top: 1px solid #b2b2b2; }
  .cbar { display: flex; height: 37px; padding-bottom: 2px; align-items: center; margin-left: -1px; flex: none; }
  .omni { display: flex; width: 159px; height: 28px; margin-left: 10px; padding: 0 5px; border: 1px solid #b5b5b5; border-radius: 3px; background: #fff; align-items: center; }
  .host { width: 115px; padding-left: 5px; font-size: 13.500px; color: #111; }
  em { font-style: normal; color: #888; }
  .marks { display: flex; height: 24px; padding: 0 23px 5px 11px; align-items: center; flex: none; color: #111; }
  .m1 { width: 49px; padding-left: 10px; }
  .m2 { width: 59px; padding-left: 8px; }
  .m3 { width: 123px; padding-left: 8px; -webkit-mask: linear-gradient(90deg, #000 75%, transparent); }
  .marks > .ic:last-child { margin-left: auto; }

  .explorer { left: 917px; width: 408px; background: #72adeb; border-color: #5d87b8; padding: 0 7px; }
  .ititle { display: flex; height: 26px; padding-left: 304px; margin-right: -2px; }
  .ititle .wbtn { height: 26px; width: 26px; flex: none; }
  .ititle .imax { height: 20px; width: 18px; }
  .ititle .close { flex: none; }
  .inav { display: flex; height: 27px; align-items: flex-start; margin-right: -1px; }
  .inav > .ic { margin-top: -7px; margin-left: 1px; height: 34px; overflow: hidden; }
  .ifwd { margin: -1px 0 0 2px; height: 27px; }
  .iaddr { display: flex; width: 198px; height: 25px; margin-left: 4px; padding-left: 3px; border: 1px solid #5785bc; background: #d1e2f8; align-items: center; color: #6b7580; flex: none; }
  .iurl { width: 125px; padding-left: 4px; }
  .iurl b { display: inline; color: #111; }
  .itab { display: flex; width: 120px; height: 27px; margin-left: 4px; padding-left: 4px; background: #fff; border: solid #5d87b8; border-width: 1px 0 0 1px; align-items: center; flex: none; color: #222; }
  .itt { padding-left: 3px; }
  .ibody { display: flex; width: 394px; height: 667px; margin-left: -1px; border: 1px solid #5d8dc5; }

  .taskbar { position: absolute; left: 0; right: 0; top: 728px; height: 40px; display: flex; justify-content: space-between; background: linear-gradient(rgba(56, 87, 121, .76), rgba(56, 88, 124, .76)); color: #fff; }
  .apps { display: flex; padding: 1px 0; gap: 4px; }
  .task { display: flex; width: 58px; height: 38px; align-items: center; justify-content: center; }
  .task.start { width: 48px; padding-left: 2px; }
  .open { background: rgba(255, 255, 255, .2); border: 1px solid rgba(190, 208, 226, .65); }
  .front { background: rgba(255, 255, 255, .42); border-color: #d7e0e9; }
  .tray { display: flex; width: 239px; align-items: center; }
  .eng { width: 38px; margin-left: 14px; }
  .clock { width: 62px; text-align: center; line-height: 17px; }
</style>
